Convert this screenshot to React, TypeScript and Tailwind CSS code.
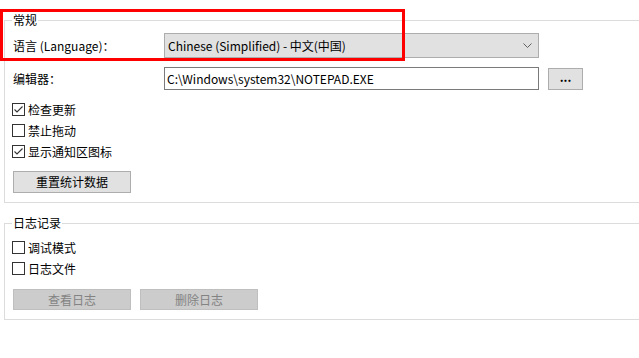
import React from "react";

const font = "font-['Microsoft_YaHei_UI','Noto_Sans_CJK_SC',sans-serif]";

const CheckRow = ({ label, checked }: { label: string; checked?: boolean }) => (
  <div className="flex h-[21px] items-center">
    <span className="ml-[3px] flex h-[13px] w-[13px] items-center justify-center border border-[#333333] bg-white">
      {checked && (
        <svg width="11" height="11" viewBox="0 0 11 11">
          <polyline points="1.5,5.5 4,8 9.5,2.5" fill="none" stroke="#333333" strokeWidth="1.1" />
        </svg>
      )}
    </span>
    <span className="ml-[3px] text-[12px] leading-none text-black">{label}</span>
  </div>
);

const Button = ({ label, disabled }: { label: string; disabled?: boolean }) => (
  <div
    className={
      disabled
        ? "flex h-[21px] w-[118px] items-center justify-center border border-[#bfbfbf] bg-[#cccccc] text-[12px] text-[#838383]"
        : "flex h-[22px] w-[118px] items-center justify-center border border-[#adadad] bg-[#e1e1e1] text-[12px] text-black"
    }
  >
    {label}
  </div>
);

export default function App() {
  return (
    <div className={`relative h-[358px] w-[639px] overflow-hidden bg-white ${font}`}>
      <fieldset className="ml-[4px] mt-[12px] w-[640px] border border-[#dcdcdc] px-[8px] pb-[9px]">
        <legend className="-ml-[1px] px-[1px] text-[12px] leading-[16px] text-black">常规</legend>
        <div className="mt-[5px] flex h-[25px] items-center">
          <span className="w-[151px] text-[12px] text-black">语言 (Language)：</span>
          <div className="flex h-[25px] w-[375px] items-center justify-between border border-[#adadad] bg-[#e1e1e1] pl-[3px] pr-[6px]">
            <span className="text-[12px] text-black">Chinese (Simplified) - 中文(中国)</span>
            <svg width="9" height="6" viewBox="0 0 9 6">
              <polyline points="0.5,0.5 4.5,4.5 8.5,0.5" fill="none" stroke="#606060" strokeWidth="1" />
            </svg>
          </div>
        </div>
        <div className="mt-[9px] flex h-[23px] items-center">
          <span className="w-[151px] text-[12px] text-black">编辑器：</span>
          <div className="flex h-[23px] w-[375px] items-center border border-[#7a7a7a] bg-white pl-[2px]">
            <span className="text-[12px] text-black">C:\Windows\system32\NOTEPAD.EXE</span>
          </div>
          <div className="ml-[9px] flex h-[22px] w-[35px] items-center justify-center border border-[#adadad] bg-[#e1e1e1] pb-[4px] text-[12px] font-bold text-black">
            ...
          </div>
        </div>
        <div className="mt-[9px] -ml-[4px]">
          <CheckRow label="检查更新" checked />
          <CheckRow label="禁止拖动" />
          <CheckRow label="显示通知区图标" checked />
        </div>
        <div className="mt-[9px]">
          <Button label="重置统计数据" />
        </div>
      </fieldset>

      <fieldset className="ml-[4px] mt-[12px] w-[640px] border border-[#dcdcdc] px-[8px] pb-[9px]">
        <legend className="-ml-[1px] px-[1px] text-[12px] leading-[16px] text-black">日志记录</legend>
        <div className="mt-[6px] -ml-[4px]">
          <CheckRow label="调试模式" />
          <CheckRow label="日志文件" />
        </div>
        <div className="mt-[10px] flex gap-[9px]">
          <Button label="查看日志" disabled />
          <Button label="删除日志" disabled />
        </div>
      </fieldset>

      <div className="absolute left-0 top-[9px] h-[52px] w-[405px] border-[3px] border-[#ff0000]" />
    </div>
  );
}
